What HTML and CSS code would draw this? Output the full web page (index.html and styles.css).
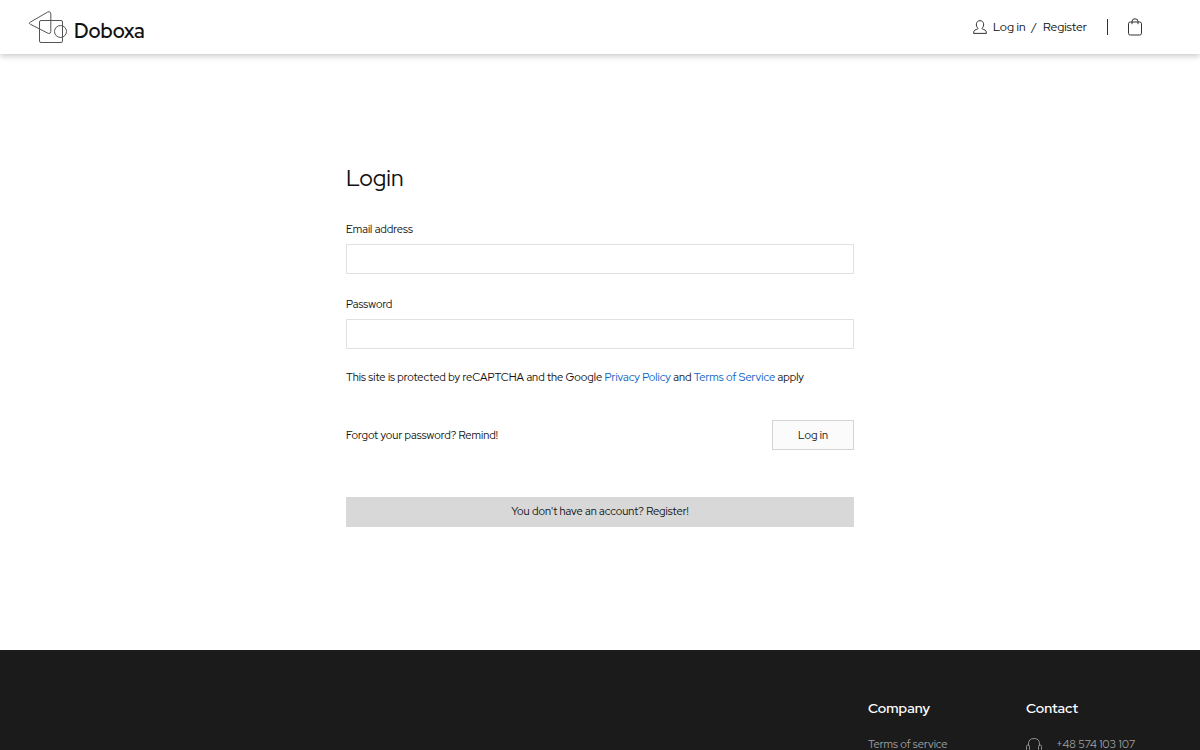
FILE: index.html
```html
<!DOCTYPE html>
<html lang="en">
<head>
<meta charset="utf-8">
<meta name="viewport" content="width=device-width, initial-scale=1">
<title>Doboxa</title>
<link rel="stylesheet" href="styles.css">
</head>
<body>
<header class="header">
  <a class="brand" href="#">
    <svg class="brand-mark" viewBox="0 0 40 34" fill="none" stroke="#555" stroke-width="1" aria-hidden="true">
      <path d="M2.200 12.200 19.800 2Q22.600 .9 22.800 4V21.500Q22.600 24.200 20.300 23.400L2.200 14.200Q.4 13.200 2.200 12.200Z"/>
      <rect x="11.500" y="10.500" width="23" height="22" rx="1.500"/>
      <circle cx="32.500" cy="21.500" r="6"/>
    </svg>
    <span class="brand-name">Doboxa</span>
  </a>
  <nav class="account" aria-label="Account">
    <svg class="user-icon" viewBox="0 0 14 14" fill="none" stroke="#333" stroke-width="1" aria-hidden="true">
      <path d="M5 8.200C3.600 7 3.200 5.500 3.400 3.800 3.600 1.900 5 .7 7 .7s3.400 1.200 3.600 3.100C10.800 5.500 10.400 7 9 8.200c.2 1 .8 1 2 1.400 1.500.5 2.400 1.300 2.400 3.800H.6c0-2.500.9-3.300 2.400-3.800 1.200-.4 1.800-.4 2-1.400Z"/>
    </svg>
    <a href="#">Log in</a>
    <span class="slash">/</span>
    <a href="#">Register</a>
    <span class="divider"></span>
    <a class="cart" href="#" aria-label="Cart">
      <svg class="cart-icon" viewBox="0 0 14 18" fill="none" stroke="#333" stroke-width="1" aria-hidden="true">
        <rect x=".5" y="4" width="13" height="13" rx="1.800"/>
        <path d="M4 6.200V3.500Q4 .8 7 .8T10 3.500V6.200"/>
      </svg>
    </a>
  </nav>
</header>

<main class="main">
  <form class="login">
    <h1 class="title">Login</h1>
    <label class="label" for="email">Email address</label>
    <input class="input" id="email" type="email">
    <label class="label" for="password">Password</label>
    <input class="input" id="password" type="password">
    <p class="notice">This site is protected by reCAPTCHA and the Google <a href="#">Privacy Policy</a> and <a href="#">Terms of Service</a> apply</p>
    <div class="actions">
      <a href="#">Forgot your password? Remind!</a>
      <button class="submit" type="submit">Log in</button>
    </div>
    <a class="register" href="#">You don't have an account? Register!</a>
  </form>
</main>

<footer class="footer">
  <section class="column">
    <h2 class="heading">Company</h2>
    <a href="#">Terms of service</a>
  </section>
  <section class="column">
    <h2 class="heading">Contact</h2>
    <a class="phone" href="#">
      <svg class="phone-icon" viewBox="0 0 16 18" fill="none" stroke="#8c8c8c" stroke-width="1" aria-hidden="true">
        <path d="M2.500 9V7Q2.500 1.500 8 1.500T13.500 7V9"/>
        <rect x=".5" y="8" width="3" height="6" rx="1.500"/>
        <rect x="12.500" y="8" width="3" height="6" rx="1.500"/>
        <path d="M14 14Q14 17 9 17"/>
      </svg>
      <span>+48 574 103 107</span>
    </a>
  </section>
</footer>
</body>
</html>
```
FILE: styles.css
```css
* { box-sizing: border-box; }
body {
  margin: 0;
  min-height: 100vh;
  display: flex;
  flex-direction: column;
  background: #fff;
  color: #111;
  font: 11px/16px "Red Hat Display", "Red Hat Text", Inter, sans-serif;
}
a { color: inherit; text-decoration: none; }
.header {
  display: flex;
  justify-content: space-between;
  align-items: center;
  height: 54px;
  padding: 0 58px 0 28px;
  box-shadow: 0 2px 6px rgba(0, 0, 0, .22);
}
.brand { display: flex; align-items: center; gap: 6px; }
.brand-mark { width: 40px; height: 34px; }
.brand-name { font-size: 20px; line-height: 24px; font-weight: 600; padding-top: 8px; color: #111; }
.account { display: flex; align-items: center; font-size: 12px; }
.user-icon { width: 14px; height: 14px; margin-right: 6px; }
.slash { margin: 0 6px; }
.divider { width: 1px; height: 16px; margin: 0 20px; background: #333; }
.cart-icon { display: block; width: 14px; height: 18px; }
.main { padding: 108px 20px 123px; }
.login { display: flex; flex-direction: column; max-width: 508px; margin: 0 auto; }
.title { margin: 0 0 27px; font-size: 23px; line-height: 32px; font-weight: 400; }
.label { margin-bottom: 7px; }
.input {
  width: 100%;
  height: 30px;
  margin: 0;
  padding: 0 8px;
  border: 1px solid #e0e2e2;
  background: #fff;
  font: inherit;
}
.input + .label { margin-top: 22px; }
.notice { margin: 20px 0 35px; }
.notice a { color: #0b63c8; }
.actions { display: flex; justify-content: space-between; align-items: center; margin-bottom: 47px; }
.submit {
  height: 30px;
  padding: 0 25px;
  border: 1px solid #d4d4d4;
  background: #fbfbfb;
  color: inherit;
  font: inherit;
}
.register { padding: 6px 7px 8px; background: #d8d8d8; text-align: center; }
.footer {
  display: flex;
  flex-grow: 1;
  justify-content: flex-end;
  padding: 48px 32px 32px;
  background: #1b1b1b;
  color: #a0a0a0;
}
.column { width: 158px; }
.column:last-child { width: 142px; }
.heading { margin: 0 0 18px; font-size: 14px; line-height: 20px; font-weight: 600; color: #fff; }
.phone { display: flex; gap: 14px; }
.phone-icon { width: 16px; height: 18px; margin-top: 1px; }
```
